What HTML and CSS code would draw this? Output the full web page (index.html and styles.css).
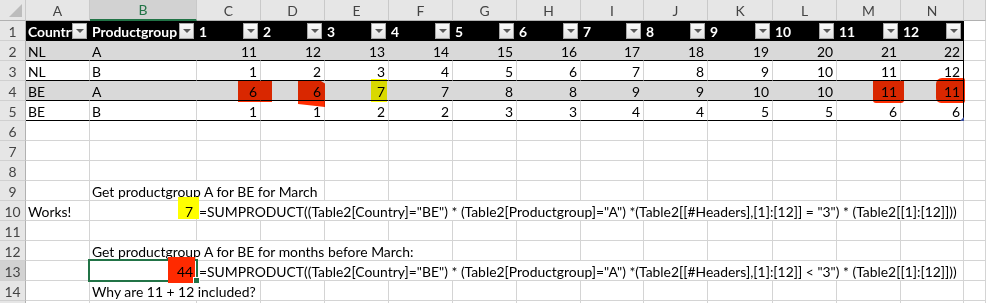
FILE: index.html
```html
<!DOCTYPE html>
<html>
<head>
<meta charset="utf-8">
<link rel="stylesheet" href="styles.css">
</head>
<body>
<div class="sheet">
  <div class="h corner"><svg width="26" height="20" viewBox="0 0 26 20"><polygon points="22,4 22,17 9,17" fill="#bcbcbc"/></svg></div>
  <div class="h">A</div><div class="h sel">B</div><div class="h">C</div><div class="h">D</div><div class="h">E</div><div class="h">F</div><div class="h">G</div><div class="h">H</div><div class="h">I</div><div class="h">J</div><div class="h">K</div><div class="h">L</div><div class="h">M</div><div class="h">N</div><div class="h"></div>

  <div class="rh">1</div>
  <div class="c th"><span class="t">Country</span><span class="dd"></span></div>
  <div class="c th"><span class="t">Productgroup</span><span class="dd"></span></div>
  <div class="c th"><span class="t">1</span><span class="dd"></span></div>
  <div class="c th"><span class="t">2</span><span class="dd"></span></div>
  <div class="c th"><span class="t">3</span><span class="dd"></span></div>
  <div class="c th"><span class="t">4</span><span class="dd"></span></div>
  <div class="c th"><span class="t">5</span><span class="dd"></span></div>
  <div class="c th"><span class="t">6</span><span class="dd"></span></div>
  <div class="c th"><span class="t">7</span><span class="dd"></span></div>
  <div class="c th"><span class="t">8</span><span class="dd"></span></div>
  <div class="c th"><span class="t">9</span><span class="dd"></span></div>
  <div class="c th"><span class="t">10</span><span class="dd"></span></div>
  <div class="c th"><span class="t">11</span><span class="dd"></span></div>
  <div class="c th last"><span class="t">12</span><span class="dd"></span></div>
  <div class="c"></div>

  <div class="rh">2</div>
  <div class="c g">NL</div><div class="c g">A</div>
  <div class="c g n">11</div><div class="c g n">12</div><div class="c g n">13</div><div class="c g n">14</div><div class="c g n">15</div><div class="c g n">16</div><div class="c g n">17</div><div class="c g n">18</div><div class="c g n">19</div><div class="c g n">20</div><div class="c g n">21</div><div class="c g n last">22</div>
  <div class="c"></div>

  <div class="rh">3</div>
  <div class="c w">NL</div><div class="c w">B</div>
  <div class="c w n">1</div><div class="c w n">2</div><div class="c w n">3</div><div class="c w n">4</div><div class="c w n">5</div><div class="c w n">6</div><div class="c w n">7</div><div class="c w n">8</div><div class="c w n">9</div><div class="c w n">10</div><div class="c w n">11</div><div class="c w n last">12</div>
  <div class="c"></div>

  <div class="rh">4</div>
  <div class="c g">BE</div><div class="c g">A</div>
  <div class="c g n m"><span class="mk red mk-c4"></span><span class="v">6</span></div>
  <div class="c g n m"><span class="mk red mk-d4"></span><span class="v">6</span></div>
  <div class="c g n m"><span class="mk yel mk-e4"></span><span class="v">7</span></div>
  <div class="c g n">7</div><div class="c g n">8</div><div class="c g n">8</div><div class="c g n">9</div><div class="c g n">9</div><div class="c g n">10</div><div class="c g n">10</div>
  <div class="c g n m"><span class="mk red mk-m4"></span><span class="v">11</span></div>
  <div class="c g n m last"><span class="mk red mk-n4"></span><span class="v">11</span></div>
  <div class="c"></div>

  <div class="rh">5</div>
  <div class="c w">BE</div><div class="c w">B</div>
  <div class="c w n">1</div><div class="c w n">1</div><div class="c w n">2</div><div class="c w n">2</div><div class="c w n">3</div><div class="c w n">3</div><div class="c w n">4</div><div class="c w n">4</div><div class="c w n">5</div><div class="c w n">5</div><div class="c w n">6</div><div class="c w n last m"><span class="v">6</span><span class="resize"></span></div>
  <div class="c"></div>

  <div class="rh">6</div>
  <div class="c"></div><div class="c"></div><div class="c"></div><div class="c"></div><div class="c"></div><div class="c"></div><div class="c"></div><div class="c"></div><div class="c"></div><div class="c"></div><div class="c"></div><div class="c"></div><div class="c"></div><div class="c"></div><div class="c"></div>

  <div class="rh">7</div>
  <div class="c"></div><div class="c"></div><div class="c"></div><div class="c"></div><div class="c"></div><div class="c"></div><div class="c"></div><div class="c"></div><div class="c"></div><div class="c"></div><div class="c"></div><div class="c"></div><div class="c"></div><div class="c"></div><div class="c"></div>

  <div class="rh">8</div>
  <div class="c"></div><div class="c"></div><div class="c"></div><div class="c"></div><div class="c"></div><div class="c"></div><div class="c"></div><div class="c"></div><div class="c"></div><div class="c"></div><div class="c"></div><div class="c"></div><div class="c"></div><div class="c"></div><div class="c"></div>

  <div class="rh">9</div>
  <div class="c"></div>
  <div class="c span3">Get productgroup A for BE for March</div>
  <div class="c"></div><div class="c"></div><div class="c"></div><div class="c"></div><div class="c"></div><div class="c"></div><div class="c"></div><div class="c"></div><div class="c"></div><div class="c"></div><div class="c"></div>

  <div class="rh">10</div>
  <div class="c">Works!</div>
  <div class="c n m"><span class="mk-b10"></span><span class="v">7</span></div>
  <div class="c span12">=SUMPRODUCT((Table2[Country]="BE") * (Table2[Productgroup]="A") *(Table2[[#Headers],[1]:[12]] = "3") * (Table2[[1]:[12]]))</div>
  <div class="c"></div>

  <div class="rh">11</div>
  <div class="c"></div><div class="c"></div><div class="c"></div><div class="c"></div><div class="c"></div><div class="c"></div><div class="c"></div><div class="c"></div><div class="c"></div><div class="c"></div><div class="c"></div><div class="c"></div><div class="c"></div><div class="c"></div><div class="c"></div>

  <div class="rh">12</div>
  <div class="c"></div>
  <div class="c span5">Get productgroup A for BE for months before March:</div>
  <div class="c"></div><div class="c"></div><div class="c"></div><div class="c"></div><div class="c"></div><div class="c"></div><div class="c"></div><div class="c"></div><div class="c"></div>

  <div class="rh rsel">13</div>
  <div class="c"></div>
  <div class="c n m"><span class="selbox"></span><span class="mk-b13"></span><span class="v top">44</span><span class="fh"></span></div>
  <div class="c span12">=SUMPRODUCT((Table2[Country]="BE") * (Table2[Productgroup]="A") *(Table2[[#Headers],[1]:[12]] &lt; "3") * (Table2[[1]:[12]]))</div>
  <div class="c"></div>

  <div class="rh">14</div>
  <div class="c"></div>
  <div class="c span2">Why are 11 + 12 included?</div>
  <div class="c"></div><div class="c"></div><div class="c"></div><div class="c"></div><div class="c"></div><div class="c"></div><div class="c"></div><div class="c"></div><div class="c"></div><div class="c"></div><div class="c"></div><div class="c"></div>

  <div class="rh">15</div>
  <div class="c"></div><div class="c"></div><div class="c"></div><div class="c"></div><div class="c"></div><div class="c"></div><div class="c"></div><div class="c"></div><div class="c"></div><div class="c"></div><div class="c"></div><div class="c"></div><div class="c"></div><div class="c"></div><div class="c"></div>
</div>
</body>
</html>
```
FILE: styles.css
```css
html, body {
  margin: 0;
  padding: 0;
  background: #fff;
  overflow: hidden;
}
body {
  font-family: Lato, "Liberation Sans", sans-serif;
  font-size: 13.9px;
  color: #000;
}
.sheet {
  display: grid;
  grid-template-columns: 26px 64px 107px 64px 64px 64px 64px 64px 64px 63px 64px 65px 64px 64px 63px 1fr;
  grid-template-rows: 21px;
  grid-auto-rows: 20px;
  height: 303px;
  overflow: hidden;
}
.c {
  box-sizing: border-box;
  border-right: 1px solid #d4d4d4;
  border-bottom: 1px solid #d4d4d4;
  white-space: nowrap;
  padding: 1px 2px 0 2px;
  line-height: 19px;
  min-width: 0;
}
.h {
  box-sizing: border-box;
  background: #e6e6e6;
  border-right: 1px solid #c9c9c9;
  border-bottom: 1px solid #b1b1b1;
  color: #444;
  text-align: center;
  line-height: 21px;
}
.h.corner {
  padding: 0;
  line-height: 0;
}
.h.sel {
  background: #d2d2d2;
  color: #217346;
  border-bottom: 2px solid #217346;
  line-height: 20px;
}
.rh {
  box-sizing: border-box;
  background: #e6e6e6;
  border-right: 1px solid #b1b1b1;
  border-bottom: 1px solid #d0d0d0;
  color: #444;
  text-align: center;
  line-height: 19px;
  padding-top: 1px;
}
.rh.rsel {
  background: #d2d2d2;
}
.th {
  background: #000;
  color: #fff;
  font-weight: bold;
  border-right-color: #000;
  border-bottom-color: #000;
  display: flex;
  align-items: center;
  padding: 0 2px 0 2px;
}
.th .t {
  flex: 1;
  min-width: 0;
  overflow: hidden;
  line-height: 19px;
  padding-top: 1px;
}
.dd {
  flex: none;
  box-sizing: border-box;
  width: 15px;
  height: 16px;
  border: 1px solid #a8a8a8;
  background: linear-gradient(#fafafa, #e2e2e2);
  display: flex;
  align-items: center;
  justify-content: center;
}
.dd::after {
  content: "";
  width: 0;
  height: 0;
  border-left: 4px solid transparent;
  border-right: 4px solid transparent;
  border-top: 4px solid #5a5a5a;
}
.g {
  background: #d9d9d9;
  border-right-color: #d9d9d9;
  border-bottom-color: #000;
}
.w {
  border-bottom-color: #000;
}
.last {
  border-right-color: #000;
}
.n {
  text-align: right;
  padding-right: 3px;
}
.span2 { grid-column: span 2; }
.span3 { grid-column: span 3; }
.span5 { grid-column: span 5; }
.span12 { grid-column: span 12; }

.m {
  position: relative;
}
.v {
  position: relative;
  z-index: 3;
}
.mk {
  position: absolute;
  mix-blend-mode: multiply;
  z-index: 2;
}
.red { background: #ff2d00; }
.yel { background: #ffff00; }
.mk-c4 { left: 41px; top: 0; width: 34px; height: 21px; }
.mk-d4 {
  left: 37px; top: 0; width: 27px; height: 26px;
  clip-path: polygon(0 0, 85% 0, 100% 10%, 100% 100%, 0 88%);
}
.mk-e4 { left: 46px; top: -2px; width: 16px; height: 23px; }
.mk-m4 { left: 36px; top: 0; width: 31px; height: 22px; border-radius: 0 0 3px 3px; }
.mk-n4 { left: 35px; top: -3px; width: 29px; height: 25px; border-radius: 6px 2px 2px 5px; }
.mk-b10 {
  position: absolute;
  left: 88px; top: -4px; width: 21px; height: 22px;
  background: #ffff00;
  z-index: 2;
}
.mk-b13 {
  position: absolute;
  left: 78px; top: -4px; width: 27px; height: 26px;
  background: #ff2a00;
  z-index: 2;
}
.selbox {
  position: absolute;
  left: -2px; top: -2px;
  width: 110px; height: 23px;
  box-sizing: border-box;
  border: 2px solid #217346;
  z-index: 1;
}
.fh {
  position: absolute;
  left: 103px; top: 16px;
  width: 7px; height: 7px;
  box-sizing: border-box;
  background: #217346;
  border: 1px solid #fff;
  z-index: 4;
}
.resize {
  position: absolute;
  right: -1px; bottom: -1px;
  width: 0; height: 0;
  border-left: 4px solid transparent;
  border-bottom: 4px solid #3b4fa0;
  z-index: 2;
}
```
